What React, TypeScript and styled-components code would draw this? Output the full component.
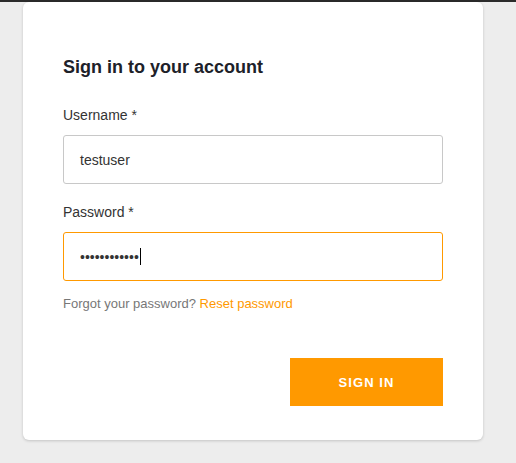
import styled, { createGlobalStyle } from "styled-components";

const GlobalStyle = createGlobalStyle`
  html, body {
    margin: 0;
    padding: 0;
    background: #ededed;
    font-family: "Liberation Sans", Arial, sans-serif;
  }
`;

const Page = styled.div`
  min-height: 463px;
  border-top: 2px solid #2b2b2b;
  box-sizing: border-box;
`;

const Card = styled.div`
  margin-left: 23px;
  width: 460px;
  box-sizing: border-box;
  padding: 54px 40px 34px;
  background: #fff;
  border-radius: 6px;
  box-shadow: 0 1px 3px rgba(0, 0, 0, 0.18);
  display: flex;
  flex-direction: column;
`;

const Title = styled.h2`
  margin: 0 0 29px;
  font-size: 18px;
  line-height: 22px;
  font-weight: bold;
  color: #1d2129;
`;

const Label = styled.label`
  display: block;
  margin-bottom: 12px;
  font-size: 14px;
  line-height: 16px;
  color: #333;
`;

const Field = styled.div<{ $focused?: boolean }>`
  height: 49px;
  box-sizing: border-box;
  border: 1px solid ${(p) => (p.$focused ? "#ff9900" : "#c8c8c8")};
  border-radius: 3px;
  padding: 0 16px;
  display: flex;
  align-items: center;
  font-size: 14px;
  color: #333;
  margin-bottom: ${(p) => (p.$focused ? "15px" : "20px")};
`;

const Caret = styled.span`
  display: inline-block;
  width: 1px;
  height: 17px;
  background: #000;
  margin-left: 1px;
`;

const Help = styled.p`
  margin: 0 0 47px;
  font-size: 13px;
  line-height: 15px;
  color: #777;
`;

const Link = styled.a`
  color: #ff9900;
  text-decoration: none;
`;

const Actions = styled.div`
  display: flex;
  justify-content: flex-end;
`;

const Button = styled.button`
  width: 153px;
  height: 48px;
  border: none;
  border-radius: 0;
  background: #ff9900;
  color: #fff;
  font-family: "Liberation Sans", Arial, sans-serif;
  font-size: 13px;
  font-weight: bold;
  letter-spacing: 1.1px;
  cursor: pointer;
`;

const App = () => {
  return (
    <Page>
      <GlobalStyle />
      <Card>
        <Title>Sign in to your account</Title>
        <Label>Username *</Label>
        <Field>testuser</Field>
        <Label>Password *</Label>
        <Field $focused>
          {"••••••••••••"}
          <Caret />
        </Field>
        <Help>
          Forgot your password? <Link href="#">Reset password</Link>
        </Help>
        <Actions>
          <Button>SIGN IN</Button>
        </Actions>
      </Card>
    </Page>
  );
};

export default App;
